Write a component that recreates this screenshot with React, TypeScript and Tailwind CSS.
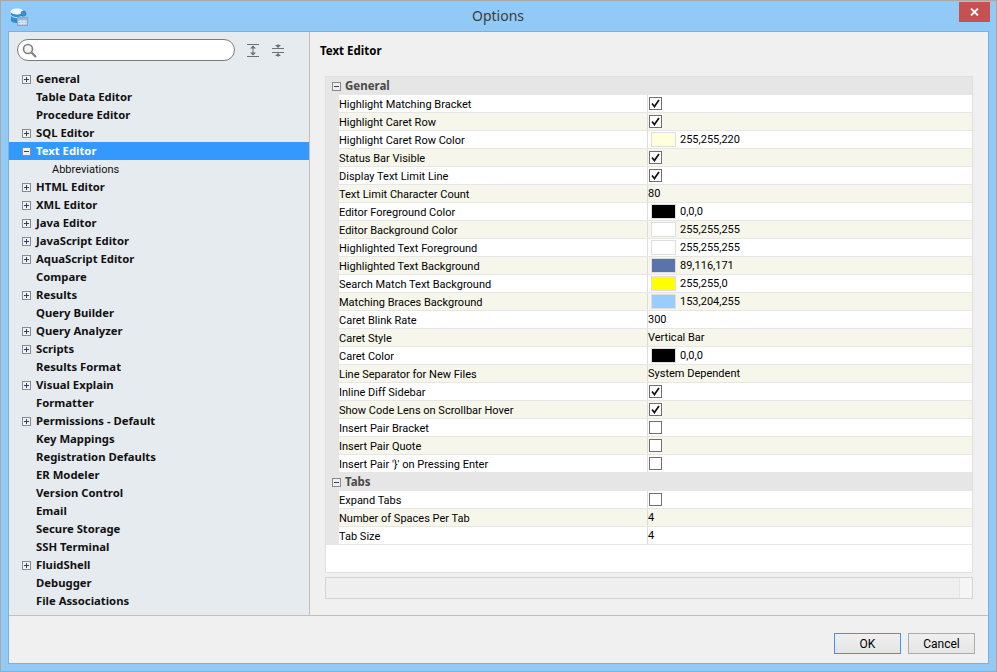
const TREE: [string, boolean][] = [
  ['General', true],
  ['Table Data Editor', false],
  ['Procedure Editor', false],
  ['SQL Editor', true],
  ['Text Editor', true],
  ['Abbreviations', false],
  ['HTML Editor', true],
  ['XML Editor', true],
  ['Java Editor', true],
  ['JavaScript Editor', true],
  ['AquaScript Editor', true],
  ['Compare', false],
  ['Results', true],
  ['Query Builder', false],
  ['Query Analyzer', true],
  ['Scripts', true],
  ['Results Format', false],
  ['Visual Explain', true],
  ['Formatter', false],
  ['Permissions - Default', true],
  ['Key Mappings', false],
  ['Registration Defaults', false],
  ['ER Modeler', false],
  ['Version Control', false],
  ['Email', false],
  ['Secure Storage', false],
  ['SSH Terminal', false],
  ['FluidShell', true],
  ['Debugger', false],
  ['File Associations', false],
];

type Row = { label: string; check?: boolean; color?: string; value?: string };

const GENERAL: Row[] = [
  { label: 'Highlight Matching Bracket', check: true },
  { label: 'Highlight Caret Row', check: true },
  { label: 'Highlight Caret Row Color', color: '#ffffdc', value: '255,255,220' },
  { label: 'Status Bar Visible', check: true },
  { label: 'Display Text Limit Line', check: true },
  { label: 'Text Limit Character Count', value: '80' },
  { label: 'Editor Foreground Color', color: '#000000', value: '0,0,0' },
  { label: 'Editor Background Color', color: '#ffffff', value: '255,255,255' },
  { label: 'Highlighted Text Foreground', color: '#ffffff', value: '255,255,255' },
  { label: 'Highlighted Text Background', color: '#5974ab', value: '89,116,171' },
  { label: 'Search Match Text Background', color: '#ffff00', value: '255,255,0' },
  { label: 'Matching Braces Background', color: '#99ccff', value: '153,204,255' },
  { label: 'Caret Blink Rate', value: '300' },
  { label: 'Caret Style', value: 'Vertical Bar' },
  { label: 'Caret Color', color: '#000000', value: '0,0,0' },
  { label: 'Line Separator for New Files', value: 'System Dependent' },
  { label: 'Inline Diff Sidebar', check: true },
  { label: 'Show Code Lens on Scrollbar Hover', check: true },
  { label: 'Insert Pair Bracket', check: false },
  { label: 'Insert Pair Quote', check: false },
  { label: "Insert Pair '}' on Pressing Enter", check: false },
];

const TABS: Row[] = [
  { label: 'Expand Tabs', check: false },
  { label: 'Number of Spaces Per Tab', value: '4' },
  { label: 'Tab Size', value: '4' },
];

function Toggle({ open, tone = 'dark' }: { open: boolean; tone?: 'dark' | 'light' }) {
  return (
    <svg width="9" height="9" viewBox="0 0 9 9" className="block shrink-0">
      <rect x="0.5" y="0.5" width="8" height="8" fill={tone === 'light' ? '#f0f0f0' : '#eef0f3'} stroke="#8a8a8a" />
      <path d="M2 4.5h5" stroke="#2f3f6f" />
      {!open && <path d="M4.5 2v5" stroke="#2f3f6f" />}
    </svg>
  );
}

function PropRow({ row, odd }: { row: Row; odd: boolean }) {
  return (
    <div className={`flex h-[18px] border-b border-[#e6e6e6] ${odd ? 'bg-[#f6f6ea]' : 'bg-white'}`}>
      <div className="w-[309px] shrink-0 border-r border-[#dcdcdc] pt-[2px] leading-[15px] text-black">{row.label}</div>
      {row.check !== undefined && (
        <div className="pl-[1px] pt-[2px]">
          <div className="flex h-[13px] w-[13px] items-center justify-center border border-[#707070] bg-white">
            {row.check && (
              <svg width="9" height="9" viewBox="0 0 9 9">
                <path d="M1 4.500 3.400 7.500 8 1" fill="none" stroke="#111" strokeWidth="1.700" />
              </svg>
            )}
          </div>
        </div>
      )}
      {row.color && (
        <div className="ml-[3px] mr-[4px] mt-[1px] h-[15px] w-[25px] border border-[#dedede]" style={{ background: row.color }} />
      )}
      {row.value && <div className="leading-[17px] text-black">{row.value}</div>}
    </div>
  );
}

function Group({ title, rows }: { title: string; rows: Row[] }) {
  return (
    <>
      <div className="flex h-[18px] items-center gap-[4px] bg-[#e6e6e6] pl-[6px] font-['Noto_Sans',sans-serif] font-bold text-[#4a4a4a]">
        <Toggle open tone="light" />
        <span className="text-[11.5px]">{title}</span>
      </div>
      <div className="border-l-[13px] border-[#e6e6e6]">
        {rows.map((r, i) => (
          <PropRow key={r.label} row={r} odd={i % 2 === 1} />
        ))}
      </div>
    </>
  );
}

export default function App() {
  return (
    <div className="flex h-[672px] w-[997px] flex-col overflow-hidden border border-[#a8a8a8] bg-[#91c9f7] font-['Roboto',sans-serif] text-[11px]">
      <div className="flex h-[30px] shrink-0 items-start pl-[9px]">
        <svg width="18" height="18" viewBox="0 0 18 18" className="mt-[7px] shrink-0">
          <path d="M1 3.500v9c0 1.400 2.700 2.500 6 2.500s6-1.100 6-2.500v-9" fill="#2f8fd8" />
          <ellipse cx="7" cy="3.500" rx="6" ry="2.500" fill="#eef6fc" stroke="#ffffff" />
          <path d="M1 7c0 1.400 2.700 2.500 6 2.500S13 8.400 13 7" fill="none" stroke="#e8f3fb" />
          <circle cx="13.500" cy="5.500" r="2.500" fill="#3f8fd6" stroke="#2c6fb0" strokeWidth="0.700" />
          <rect x="7.500" y="9.500" width="10" height="8" fill="#a9cbe8" stroke="#8fa3b5" />
          <rect x="7.500" y="9.500" width="10" height="2" fill="#8fb4d4" />
          <path d="M8 13.500h9M8 15.500h9M11 12v5M14 12v5" stroke="#e6f1fa" strokeWidth="0.700" />
        </svg>
        <div className="flex-1 pl-[9px] pt-[5px] text-center font-['Noto_Sans',sans-serif] text-[14px] leading-[20px] text-[#3c3c3c]">Options</div>
        <div className="mr-[6px] mt-[1px] flex h-[20px] w-[31px] items-center justify-center bg-[#c75050]">
          <svg width="9" height="8" viewBox="0 0 9 8">
            <path d="M1 0.500 8 7.500M8 0.500 1 7.500" stroke="#fff" strokeWidth="1.800" />
          </svg>
        </div>
      </div>
      <div className="mx-[7px] mb-[7px] flex min-h-0 flex-1 flex-col border border-[#7fb0dc] bg-[#f0f0f0]">
        <div className="flex min-h-0 flex-1 border-b border-[#c0c0c0]">
          <div className="flex w-[301px] shrink-0 flex-col border-r border-[#c0c0c0] bg-[#e6ebf0]">
            <div className="flex items-center pl-[8px] pt-[7px]">
              <div className="flex h-[22px] w-[218px] items-center rounded-full border border-[#7a7a7a] bg-white pl-[4px]">
                <svg width="15" height="15" viewBox="0 0 15 15">
                  <circle cx="6" cy="6" r="4.500" fill="#f4f4f4" stroke="#808080" strokeWidth="1.600" />
                  <path d="M9.500 9.500 14 14" stroke="#808080" strokeWidth="2.200" />
                </svg>
              </div>
              <svg width="12" height="13" viewBox="0 0 12 13" className="ml-[12px]">
                <path d="M0 .5h12M0 12.500h12M6 2v9" stroke="#707070" />
                <path d="M3 4.500 6 1.500 9 4.500zM3 8.500 6 11.500 9 8.500z" fill="#707070" />
              </svg>
              <svg width="12" height="13" viewBox="0 0 12 13" className="ml-[13px]">
                <path d="M0 4.500h12M0 8.500h12M6 0v3M6 10v3" stroke="#707070" />
                <path d="M3 1 6 4 9 1zM3 12 6 9 9 12z" fill="#707070" />
              </svg>
            </div>
            <div className="pt-[9px] font-['Noto_Sans',sans-serif] text-[11.3px]">
              {TREE.map(([name, hasKids]) => {
                const active = name === 'Text Editor';
                const child = name === 'Abbreviations';
                return (
                  <div
                    key={name}
                    className={`flex h-[18px] items-center pl-[13px] leading-[18px] ${active ? 'bg-[#3399ff] text-white' : 'text-[#111]'}`}
                  >
                    <div className="w-[14px] shrink-0">{hasKids && <Toggle open={active} />}</div>
                    <span className={child ? "pl-[16px] pt-[1px] font-['Roboto',sans-serif] text-[11px] leading-[16px]" : 'font-bold'}>{name}</span>
                  </div>
                );
              })}
            </div>
          </div>
          <div className="flex min-w-0 flex-1 flex-col pl-[15px] pr-[15px]">
            <div className="-ml-[5px] pt-[10px] font-['Noto_Sans',sans-serif] text-[11.5px] font-bold leading-[18px] text-black">Text Editor</div>
            <div className="mt-[16px] flex h-[497px] flex-col border border-[#e0e0e0] bg-white">
              <Group title="General" rows={GENERAL} />
              <Group title="Tabs" rows={TABS} />
            </div>
            <div className="mt-[4px] flex h-[22px] justify-end border border-[#d4d4d4] bg-[#efefef]">
              <div className="w-[13px] border-l border-[#e4e4e4] bg-[#f5f5f5]" />
            </div>
          </div>
        </div>
        <div className="flex h-[47px] shrink-0 items-start justify-end gap-[7px] pr-[13px] pt-[17px]">
          <button className="h-[21px] w-[67px] border border-[#3399ff] bg-gradient-to-b from-[#f0f0f0] to-[#e5e5e5] text-[12px] leading-[18px] text-black">OK</button>
          <button className="h-[21px] w-[67px] border border-[#acacac] bg-gradient-to-b from-[#f0f0f0] to-[#e5e5e5] text-[12px] leading-[18px] text-black">Cancel</button>
        </div>
      </div>
    </div>
  );
}
